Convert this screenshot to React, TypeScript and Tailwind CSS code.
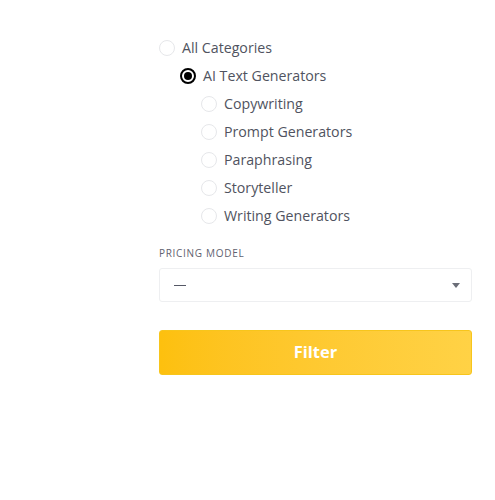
import React, { useState } from "react";

type Category = { id: string; name: string; level: number };

const categories: Category[] = [
  { id: "all", name: "All Categories", level: 0 },
  { id: "ai-text", name: "AI Text Generators", level: 1 },
  { id: "copywriting", name: "Copywriting", level: 2 },
  { id: "prompt", name: "Prompt Generators", level: 2 },
  { id: "paraphrasing", name: "Paraphrasing", level: 2 },
  { id: "storyteller", name: "Storyteller", level: 2 },
  { id: "writing", name: "Writing Generators", level: 2 },
];

const indent = ["pl-0", "pl-[21px]", "pl-[42px]"];

const Radio = ({ checked }: { checked: boolean }) =>
  checked ? (
    <span className="flex h-[16px] w-[16px] items-center justify-center rounded-full border-[2px] border-black bg-white">
      <span className="h-[8px] w-[8px] rounded-full bg-black" />
    </span>
  ) : (
    <span className="h-[16px] w-[16px] rounded-full border border-[#e6e7ea] bg-white" />
  );

export default function App() {
  const [selected, setSelected] = useState("ai-text");

  return (
    <div className="min-h-[500px] w-full bg-white font-['Open_Sans',sans-serif]">
      <div className="ml-[159px] w-[313px] pt-[34px]">
        <ul className="flex flex-col">
          {categories.map(cat => (
            <li key={cat.id} className={indent[cat.level]}>
              <button
                onClick={() => setSelected(cat.id)}
                className="flex h-[28px] items-center gap-[7px] text-[14.2px] text-[#505360]"
              >
                <Radio checked={selected === cat.id} />
                <span>{cat.name}</span>
              </button>
            </li>
          ))}
        </ul>

        <div className="mt-[16px] text-[10px] tracking-[0.07em] text-[#5f6270] uppercase">
          Pricing Model
        </div>
        <div className="mt-[7px] flex h-[34px] items-center justify-between rounded-[3px] border border-[#eeeff1] bg-white pr-[11px] pl-[14px]">
          <span className="h-px w-[12px] bg-[#555866]" />
          <svg width="8" height="5" viewBox="0 0 8 5">
            <path d="M0 0h8L4 5z" fill="#6b6e78" />
          </svg>
        </div>

        <button className="mt-[28px] flex h-[45px] w-full items-center justify-center rounded-[3px] border border-[#f7c51c] bg-gradient-to-r from-[#fdc00e] to-[#ffd245] text-[16.5px] font-bold text-white">
          Filter
        </button>
      </div>
    </div>
  );
}
